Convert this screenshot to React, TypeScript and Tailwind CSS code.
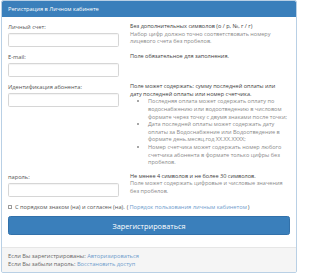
import React from "react";

const font = { fontFamily: '"Open Sans", "Liberation Sans", sans-serif' };

function Row({
  label,
  type = "text",
  children,
}: {
  label: string;
  type?: string;
  children: React.ReactNode;
}) {
  return (
    <div className="grid grid-cols-[111px_1fr] gap-x-[11px] mb-[6px]">
      <div className="flex flex-col">
        <label className="text-[5.7px] leading-[8.1px] text-[#555] mb-[2px]">{label}</label>
        <input
          type={type}
          className="h-[14px] w-full rounded-[1.6px] border border-[#d6d6d6] bg-white shadow-[inset_0_1px_1px_rgba(0,0,0,0.05)] outline-none"
        />
      </div>
      <div className="text-[5.55px] leading-[7.6px] text-[#8a8a8a]">{children}</div>
    </div>
  );
}

export default function App() {
  return (
    <div className="w-[300px] h-[274px] bg-white overflow-hidden" style={font}>
      <div className="ml-[1px] w-[296px] rounded-[2px] border border-[#b9d0e5] bg-white">
        <div className="h-[16px] bg-[#3a7fbb] px-[6px] flex items-center text-[5.7px] text-white rounded-t-[1.5px]">
          Регистрация в Личном кабинете
        </div>
        <div className="px-[6px] pt-[6px] pb-[6px]">
          <Row label="Личный счет:">
            <div className="text-[#3d3d3d]">Без дополнительных символов (о / р, №, г / г)</div>
            <div>Набор цифр должно точно соответствовать номеру лицевого счета без пробелов.</div>
          </Row>
          <Row label="E-mail:" type="email">
            <div className="text-[#3d3d3d]">Поле обязательное для заполнения.</div>
          </Row>
          <Row label="Идентификация абонента:">
            <div className="text-[#3d3d3d]">
              Поле может содержать: сумму последней оплаты или
              <br />
              дату последней оплаты или номер счетчика.
            </div>
            <ul className="list-disc pl-[18px] text-[#8a8a8a]">
              <li>
                Последняя оплата может содержать оплату по водоснабжению или водоотведению в числовом
                формате через точку с двумя знаками после точки;
              </li>
              <li>
                Дата последней оплаты может содержать дату оплаты за Водоснабжение или Водоотведение в
                формате день.месяц.год XX.XX.XXXX;
              </li>
              <li>
                Номер счетчика может содержать номер любого счетчика абонента в формате только цифры без
                пробелов.
              </li>
            </ul>
          </Row>
          <Row label="пароль:" type="password">
            <div className="text-[#3d3d3d]">Не менее 4 символов и не более 30 символов.</div>
            <div>Поле может содержать цифровые и числовые значения без пробелов.</div>
          </Row>
          <div className="flex items-center h-[8.1px] mt-[2px] text-[5.7px] leading-[8.1px] text-[#555]">
            <span className="inline-block w-[4px] h-[4px] border border-[#9a9a9a] rounded-[0.5px] bg-white mr-[3px]" />
            <span>С порядком знаком (на) и согласен (на).</span>
            <span className="ml-[2px]">(</span>
            <span className="ml-[1px] text-[#6f9ccc]">Порядок пользования личным кабинетом</span>
            <span className="ml-[1px]">)</span>
          </div>
          <button className="mt-[5px] mb-[6px] w-full h-[19px] rounded-[2.4px] bg-[#3a7fbb] border border-[#3271aa] text-white text-[7.3px] leading-[8px]">
            Зарегистрироваться
          </button>
        </div>
        <div className="bg-[#f5f5f5] border-t border-[#e6e6e6] px-[6px] py-[4px] text-[5.7px] leading-[8px] text-[#666] rounded-b-[1.5px]">
          <div>
            Если Вы зарегистрированы: <span className="text-[#6f9ccc]">Авторизироваться</span>
          </div>
          <div>
            Если Вы забыли пароль: <span className="text-[#6f9ccc]">Восстановить доступ</span>
          </div>
        </div>
      </div>
    </div>
  );
}
